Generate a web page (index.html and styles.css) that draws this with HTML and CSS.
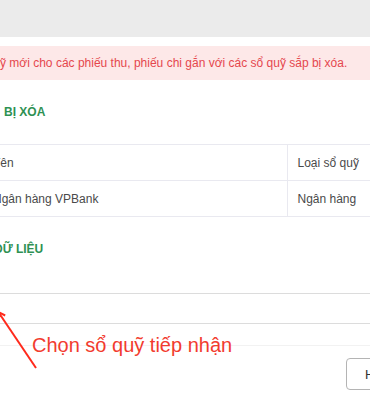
FILE: index.html
```html
<!DOCTYPE html>
<html>
<head>
<meta name="viewport" content="width=device-width, initial-scale=1">
<link rel="stylesheet" href="styles.css">
</head>
<body>

<div class="page">
  <div class="topbar"></div>

  <div class="alert">ỹ mới cho các phiếu thu, phiếu chi gắn với các sổ quỹ sắp bị xóa.</div>

  <h3 class="section-title first">BỊ XÓA</h3>

  <table class="fund-table">
    <tr>
      <td class="col-name">Tên</td>
      <td class="col-type">Loại sổ quỹ</td>
    </tr>
    <tr>
      <td class="col-name">Ngân hàng VPBank</td>
      <td class="col-type">Ngân hàng</td>
    </tr>
  </table>

  <h3 class="section-title second">DỮ LIỆU</h3>

  <div class="fund-select"></div>

  <div class="footer">
    <button type="button" class="cancelbtn">Hủy</button>
  </div>

  <!-- annotation drawn over the screenshot -->
  <svg class="note-arrow" width="50" height="80" viewBox="0 0 50 80">
    <line x1="36" y1="68" x2="-1" y2="13" stroke="#ff2a1c" stroke-width="2" />
    <polyline points="-1.5,20 -2,12 5.2,15.5" fill="none" stroke="#ff2a1c" stroke-width="2" />
  </svg>
  <div class="note-text">Chọn sổ quỹ tiếp nhận</div>
</div>

</body>
</html>
```

FILE: styles.css
```css
body {
  margin: 0;
  font-family: "Liberation Sans", Arial, Helvetica, sans-serif;
  background-color: white;
}

* {
  box-sizing: border-box;
}

.page {
  position: relative;
  width: 370px;
  height: 400px;
  overflow: hidden;
}

/* Grey header strip */
.topbar {
  height: 37px;
  background-color: #ebebeb;
}

/* Warning message */
.alert {
  margin-top: 9px;
  height: 34px;
  line-height: 34px;
  background-color: #fde8e8;
  color: #e5474d;
  font-size: 12px;
  white-space: nowrap;
}

.section-title {
  margin: 0;
  height: 24px;
  line-height: 24px;
  font-size: 12px;
  font-weight: bold;
  color: #2e9153;
  white-space: nowrap;
}

.section-title.first {
  margin-top: 20px;
  padding-left: 4px;
}

.section-title.second {
  margin-top: 20px;
  margin-left: -6px;
}

/* Funds to delete */
.fund-table {
  margin: 20px 0 0 -20px;
  border-collapse: collapse;
  width: 460px;
  font-size: 12px;
  color: #4a4a4a;
}

.fund-table td {
  height: 36px;
  padding: 0 0 0 13px;
  border-top: 1px solid #e9e9f0;
  border-bottom: 1px solid #e9e9f0;
  white-space: nowrap;
}

.fund-table .col-name {
  width: 307px;
  border-right: 1px solid #e9e9f0;
}

.fund-table .col-type {
  padding-left: 10px;
}

/* Receiving fund picker */
.fund-select {
  margin: 32px 0 0 -20px;
  width: 440px;
  height: 31px;
  border: 1px solid #dcdcdc;
  border-radius: 4px;
}

.footer {
  display: flex;
  justify-content: flex-end;
  margin-top: 21px;
  padding-top: 12px;
  width: 440px;
  border-top: 1px solid #f2f2f2;
}

.cancelbtn {
  width: 80px;
  height: 32px;
  margin-right: 14px;
  padding: 0 0 0 18px;
  text-align: left;
  font-family: inherit;
  font-size: 13px;
  color: #333;
  background-color: white;
  border: 1px solid #b4b4b4;
  border-radius: 4px;
}

.note-arrow {
  position: absolute;
  left: 0;
  top: 300px;
  overflow: visible;
}

.note-text {
  position: absolute;
  left: 32px;
  top: 333px;
  font-size: 20px;
  line-height: 24px;
  color: #f23b2e;
  white-space: nowrap;
}
```
